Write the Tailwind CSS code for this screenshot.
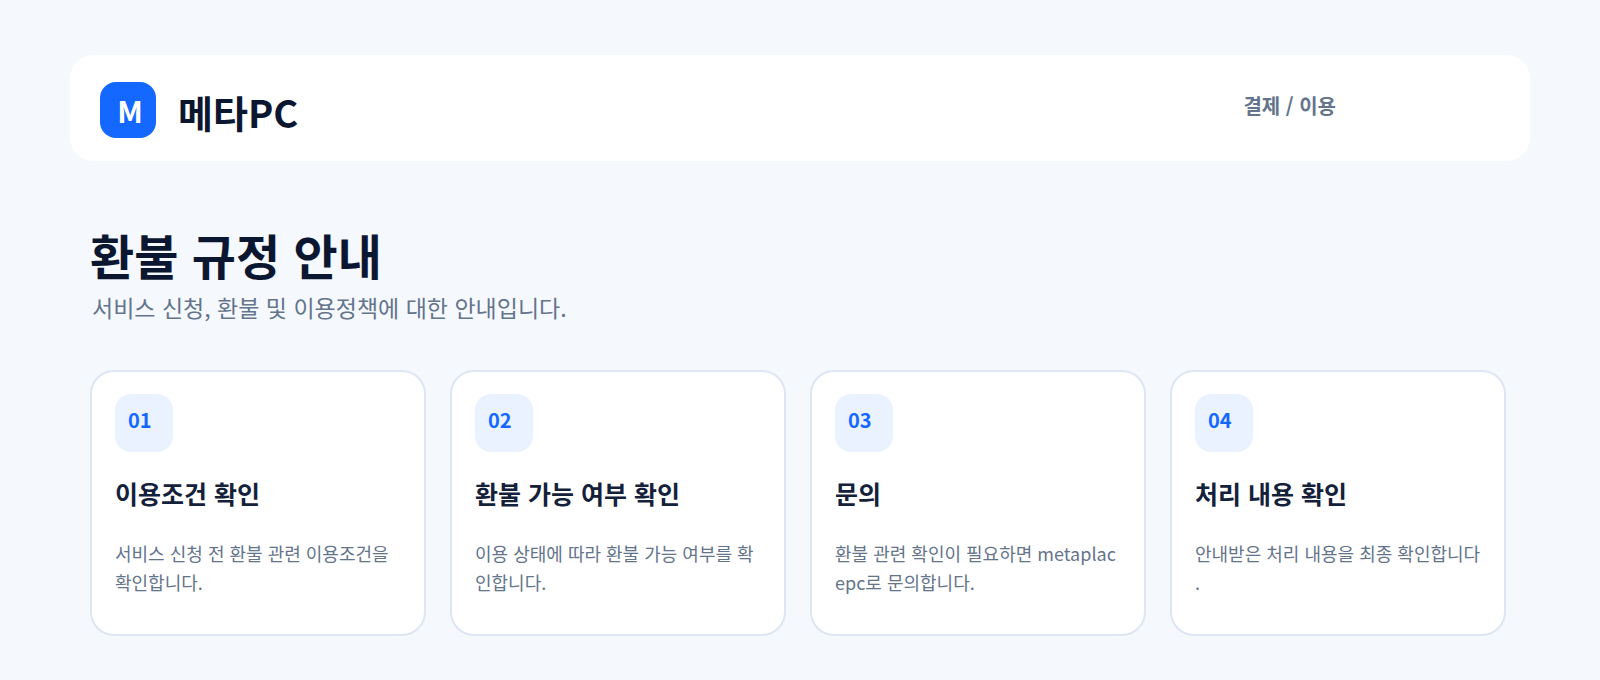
<!DOCTYPE html>
<html lang="ko">
<head>
<meta charset="utf-8">
<title>환불 규정 안내 - 메타PC</title>
<script src="https://cdn.jsdelivr.net/npm/@tailwindcss/browser@4"></script>
</head>
<body class="min-h-screen bg-[#f5f8fd] px-[70px] pt-[55px] pb-11 font-['Noto_Sans_CJK_KR',sans-serif] text-[#0b1730]">
<header class="flex items-center justify-between rounded-3xl bg-white pt-[27px] pr-[194px] pb-[23px] pl-[30px]">
  <a href="#" class="flex items-center gap-[22px]">
    <span class="flex size-14 items-center justify-center rounded-2xl bg-[#1468ff] pb-px pl-1 text-[30px] leading-none font-bold text-white">M</span>
    <span class="pt-1 text-[38px] leading-[48px] font-bold">메타PC</span>
  </a>
  <nav><a href="#" class="block pb-2 text-xl font-bold text-[#64748b]">결제 / 이용</a></nav>
</header>
<main class="px-5 pt-[58px]">
  <h1 class="text-[48px] leading-[70px] font-bold">환불 규정 안내</h1>
  <p class="pl-0.5 text-[23px] leading-9 text-[#64748b]">서비스 신청, 환불 및 이용정책에 대한 안내입니다.</p>
  <ol class="mt-[45px] mr-1 grid grid-cols-4 gap-6">
    <li class="rounded-3xl border-2 border-[#dde6f2] bg-white px-[23px] pt-[22px] pb-[37px]">
      <span class="flex size-[58px] rounded-2xl bg-[#eaf2ff] pt-3 pl-[13px] text-xl font-bold text-[#1468ff]">01</span>
      <h2 class="mt-[21px] text-[25px] leading-10 font-bold text-[#14213a]">이용조건 확인</h2>
      <p class="mt-[26px] text-lg leading-[29px] break-all text-[#64748b]">서비스 신청 전 환불 관련 이용조건을<br>확인합니다.</p>
    </li>
    <li class="rounded-3xl border-2 border-[#dde6f2] bg-white px-[23px] pt-[22px] pb-[37px]">
      <span class="flex size-[58px] rounded-2xl bg-[#eaf2ff] pt-3 pl-[13px] text-xl font-bold text-[#1468ff]">02</span>
      <h2 class="mt-[21px] text-[25px] leading-10 font-bold text-[#14213a]">환불 가능 여부 확인</h2>
      <p class="mt-[26px] text-lg leading-[29px] break-all text-[#64748b]">이용 상태에 따라 환불 가능 여부를 확<br>인합니다.</p>
    </li>
    <li class="rounded-3xl border-2 border-[#dde6f2] bg-white px-[23px] pt-[22px] pb-[37px]">
      <span class="flex size-[58px] rounded-2xl bg-[#eaf2ff] pt-3 pl-[13px] text-xl font-bold text-[#1468ff]">03</span>
      <h2 class="mt-[21px] text-[25px] leading-10 font-bold text-[#14213a]">문의</h2>
      <p class="mt-[26px] text-lg leading-[29px] break-all text-[#64748b]">환불 관련 확인이 필요하면 metaplac<br>epc로 문의합니다.</p>
    </li>
    <li class="rounded-3xl border-2 border-[#dde6f2] bg-white px-[23px] pt-[22px] pb-[37px]">
      <span class="flex size-[58px] rounded-2xl bg-[#eaf2ff] pt-3 pl-[13px] text-xl font-bold text-[#1468ff]">04</span>
      <h2 class="mt-[21px] text-[25px] leading-10 font-bold text-[#14213a]">처리 내용 확인</h2>
      <p class="mt-[26px] text-lg leading-[29px] break-all text-[#64748b]">안내받은 처리 내용을 최종 확인합니다<br>.</p>
    </li>
  </ol>
</main>
</body>
</html>
